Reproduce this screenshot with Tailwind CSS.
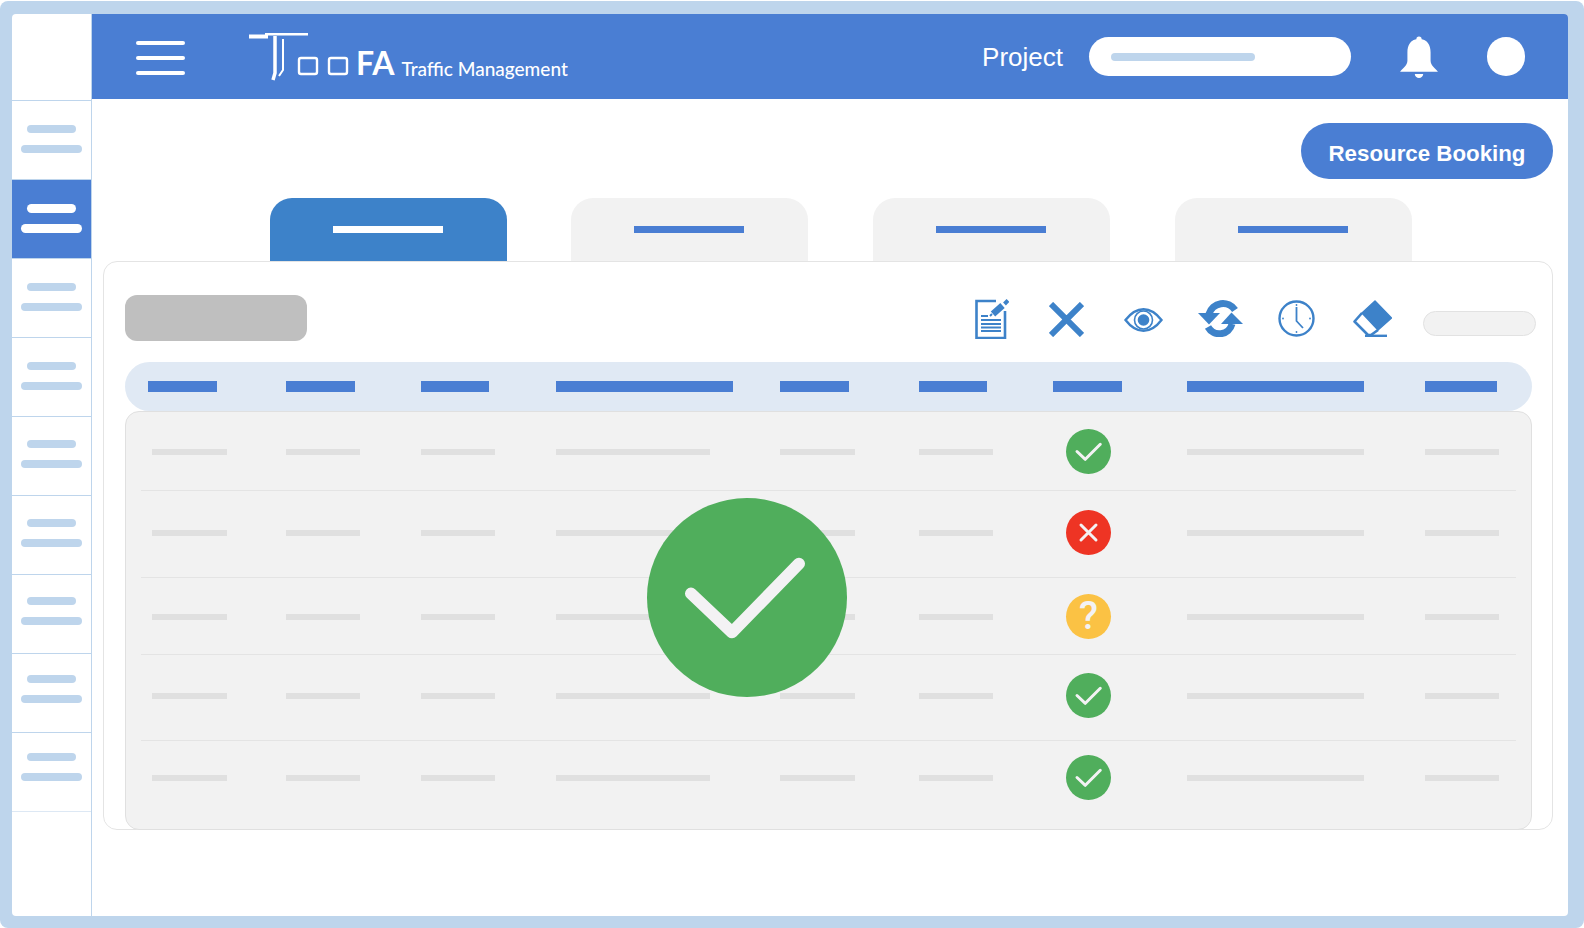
<!DOCTYPE html>
<html lang="en">
<head>
  <meta charset="UTF-8" />
  <title>Toofa Traffic Management</title>
  <script src="https://cdn.jsdelivr.net/npm/@tailwindcss/browser@4"></script>
</head>
<body class="bg-white font-['Liberation_Sans',sans-serif]">

  <!-- outer frame -->
  <div class="w-[1584px] h-[927px] mt-px bg-[#bed5ec] rounded-lg pl-3 pt-[13px] pr-4 pb-3 overflow-hidden">
    <div class="flex h-full bg-white rounded overflow-hidden">

      <!-- sidebar -->
      <aside class="w-[80px] shrink-0 border-r border-[#bed5ec]">
        <div class="h-[87px] border-b border-[#bed5ec]"></div>
        <div id="sidebar"></div>
      </aside>

      <div class="flex-1 min-w-0">
        <!-- top bar -->
        <header class="flex items-center h-[85px] bg-[#4a7ed3] pl-11 text-white">
          <div class="flex flex-col gap-[11px] w-[49px] mt-[3px]">
            <span class="h-1 bg-white rounded-full"></span>
            <span class="h-1 bg-white rounded-full"></span>
            <span class="h-1 bg-white rounded-full"></span>
          </div>
          <div class="flex items-end ml-[64px] h-[50px] mt-[-2px]">
            <svg class="w-[101px] h-[50px] mb-[-2px]" viewBox="0 0 101 50" fill="none">
              <path d="M0 3.5H19" stroke="#fff" stroke-width="4"/>
              <path d="M16 1.2H59" stroke="#fff" stroke-width="2.4"/>
              <path d="M26 3V40L24 47" stroke="#fff" stroke-width="3.5"/>
              <path d="M34 6V37L30 43" stroke="#fff" stroke-width="2"/>
              <rect x="50" y="25" width="18" height="16" rx="2" stroke="#fff" stroke-width="2.4"/>
              <rect x="80" y="25" width="18" height="16" rx="2" stroke="#fff" stroke-width="2.4"/>
            </svg>
            <span class="ml-[6px] mb-[-1px] font-['Lato',sans-serif] font-bold text-[32px] leading-[38px]">FA</span>
            <span class="ml-[7px] font-['Lato',sans-serif] font-medium text-[19px] leading-[24px]">Traffic Management</span>
          </div>
          <span class="ml-auto text-[26px] leading-none">Project</span>
          <div class="flex items-center w-[262px] h-[39px] ml-[26px] pl-[22px] bg-white rounded-full">
            <span class="w-[144px] h-2 bg-[#bed5ec] rounded-full"></span>
          </div>
          <svg class="w-[40px] h-[42px] ml-[48px]" viewBox="0 0 38 41" preserveAspectRatio="none" fill="#fff">
            <circle cx="19" cy="3" r="2.5"/>
            <path d="M19 3C11 3 8 9 8 16V24C8 29 4 31 1 35H37C34 31 30 29 30 24V16C30 9 27 3 19 3Z"/>
            <path d="M15 37H23A4 4 0 0 1 15 37Z"/>
          </svg>
          <span class="w-[38px] h-[39px] ml-[48px] mr-[43px] bg-white rounded-full"></span>
        </header>

        <!-- booking button -->
        <div class="flex justify-end pt-6 pr-[15px]">
          <button class="w-[252px] h-[56px] pt-[5px] bg-[#4a7ed3] rounded-full text-white font-bold text-[22.3px]">Resource Booking</button>
        </div>

        <!-- tabs -->
        <div class="flex gap-[65px] pl-[178px] mt-[19px]">
          <div class="flex justify-center pt-7 pr-[2px] w-[237px] h-[63px] mr-[-1px] bg-[#3d82c9] rounded-t-[22px]"><span class="w-[110px] h-[7px] bg-white"></span></div>
          <div class="flex justify-center pt-7 pr-[2px] w-[237px] h-[63px] bg-[#f2f2f2] rounded-t-[22px]"><span class="w-[110px] h-[7px] bg-[#4a7ed3]"></span></div>
          <div class="flex justify-center pt-7 pr-[2px] w-[237px] h-[63px] bg-[#f2f2f2] rounded-t-[22px]"><span class="w-[110px] h-[7px] bg-[#4a7ed3]"></span></div>
          <div class="flex justify-center pt-7 pr-[2px] w-[237px] h-[63px] bg-[#f2f2f2] rounded-t-[22px]"><span class="w-[110px] h-[7px] bg-[#4a7ed3]"></span></div>
        </div>

        <!-- card -->
        <section class="relative ml-[11px] mr-[15px] pl-[21px] pr-5 pt-[33px] bg-white border border-[#e4e4e4] rounded-[14px]">
          <div class="flex items-center h-[46px]">
            <span class="w-[182px] h-[46px] bg-[#bfbfbf] rounded-xl"></span>

            <svg class="w-[34px] h-[41px] ml-auto" viewBox="0 0 34 41" fill="none" stroke="#3d82c9">
              <path d="M21 3H1.5V40H30V13" stroke-width="2.6"/>
              <path d="M6 18H13M6 22H26M6 26H26M6 29.5H26M6 33H26" stroke-width="1.8"/>
              <path d="M15 18L17 16" stroke-width="2"/>
              <path d="M18 16L27.5 7.5" stroke-width="6.5"/>
              <path d="M29.5 6L33 2.5" stroke-width="4"/>
            </svg>
            <svg class="w-[35px] h-[35px] ml-[40px] mt-[3px]" viewBox="0 0 35 35" fill="none" stroke="#3d82c9" stroke-width="6">
              <path d="M2 2L33 33M33 2L2 33"/>
            </svg>
            <svg class="w-[39px] h-[24px] ml-[40px] mt-[3px]" viewBox="0 0 39 24" fill="none" stroke="#3d82c9">
              <path d="M1.5 12C8 3.5 14 1.2 19.5 1.2S31 3.5 37.5 12C31 20.5 25 22.8 19.5 22.8S8 20.5 1.5 12Z" stroke-width="2.4"/>
              <circle cx="19.5" cy="12" r="9" stroke-width="1.6"/>
              <circle cx="19.5" cy="12" r="5.8" fill="#3d82c9" stroke="none"/>
            </svg>
            <svg class="w-[45px] h-[37px] ml-[35px]" viewBox="0 0 45 37" fill="none" stroke="#3d82c9" stroke-width="7">
              <path d="M11 14A14.5 14.5 0 0 1 37 10"/>
              <path d="M10 27A13 13 0 0 0 34 24"/>
              <polygon points="0,13 22,13 11,24.5" fill="#3d82c9" stroke="none"/>
              <polygon points="23,24 45,24 33.5,12.5" fill="#3d82c9" stroke="none"/>
            </svg>
            <svg class="w-[37px] h-[37px] ml-[35px]" viewBox="0 0 37 37" fill="none" stroke="#3d82c9">
              <circle cx="18.5" cy="18.5" r="17" stroke-width="2.4"/>
              <path d="M18.5 7V21L25 28" stroke-width="1.8"/>
              <circle cx="18.5" cy="5" r="0.9" fill="#3d82c9" stroke="none"/>
              <circle cx="18.5" cy="32" r="0.9" fill="#3d82c9" stroke="none"/>
              <circle cx="5" cy="18.5" r="0.9" fill="#3d82c9" stroke="none"/>
              <circle cx="32" cy="18.5" r="0.9" fill="#3d82c9" stroke="none"/>
            </svg>
            <svg class="w-[39px] h-[37px] ml-[38px]" viewBox="0 0 39 37" fill="none" stroke="#3d82c9" stroke-linejoin="round">
              <path d="M22 1L38.5 18L25 30L9 13Z" fill="#3d82c9" stroke-width="1.5"/>
              <path d="M9 13L1.5 21.5L15 35H18L25 30" stroke-width="2.6"/>
              <path d="M12 35.8H34" stroke-width="2.4"/>
            </svg>
            <span class="w-[113px] h-[25px] ml-[31px] mr-[-4px] mt-[11px] bg-[#f2f2f2] border border-[#e2e2e2] rounded-full"></span>
          </div>

          <!-- table head -->
          <div class="grid grid-cols-[138px_135px_135px_224px_139px_134px_134px_238px_1fr] items-center h-[49px] mt-[21px] pl-[23px] bg-[#e0e9f4] rounded-full">
            <span class="w-[69px] h-[11px] bg-[#4a7ed3]"></span>
            <span class="w-[69px] h-[11px] bg-[#4a7ed3]"></span>
            <span class="w-[68px] h-[11px] bg-[#4a7ed3]"></span>
            <span class="w-[177px] h-[11px] bg-[#4a7ed3]"></span>
            <span class="w-[69px] h-[11px] bg-[#4a7ed3]"></span>
            <span class="w-[68px] h-[11px] bg-[#4a7ed3]"></span>
            <span class="w-[69px] h-[11px] bg-[#4a7ed3]"></span>
            <span class="w-[177px] h-[11px] bg-[#4a7ed3]"></span>
            <span class="w-[72px] h-[11px] bg-[#4a7ed3]"></span>
          </div>

          <!-- table body -->
          <div id="rows" class="px-[15px] mb-[-1px] bg-[#f2f2f2] border border-[#e0e0e0] rounded-[14px]"></div>

          <!-- big status badge over the table -->
          <svg class="absolute left-[543px] top-[236px] w-[200px] h-[199px]" viewBox="0 0 200 200" preserveAspectRatio="none" fill="none">
            <circle cx="100" cy="100" r="100" fill="#50ae5c"/>
            <path d="M44 96L85 135L152 66" stroke="#f3f2f4" stroke-width="12" stroke-linecap="round" stroke-linejoin="round"/>
          </svg>
        </section>
      </div>
    </div>
  </div>

  <script>
    // Sidebar entries, the second one is selected
    const sidebar = document.getElementById("sidebar");
    const sidebarItems = [
      "flex flex-col items-center gap-3 h-[79px] pt-[24px] border-b border-[#bed5ec]",
      "flex flex-col items-center justify-center gap-[11px] h-[79px] pb-[2px] bg-[#4a7ed3] border-b border-[#bed5ec]",
      "flex flex-col items-center gap-3 h-[79px] pt-[24px] border-b border-[#bed5ec]",
      "flex flex-col items-center gap-3 h-[79px] pt-[24px] border-b border-[#bed5ec]",
      "flex flex-col items-center gap-3 h-[79px] pt-[23px] border-b border-[#bed5ec]",
      "flex flex-col items-center gap-3 h-[79px] pt-[23px] border-b border-[#bed5ec]",
      "flex flex-col items-center gap-3 h-[79px] pt-[22px] border-b border-[#bed5ec]",
      "flex flex-col items-center gap-3 h-[79px] pt-[21px] border-b border-[#bed5ec]",
      "flex flex-col items-center gap-3 h-[79px] pt-[20px] border-b border-[#dde8f4]",
    ];
    sidebarItems.forEach((classes, i) => {
      const item = document.createElement("div");
      item.className = classes;
      const barColor = i === 1 ? "bg-white h-[9px]" : "bg-[#bed5ec] h-2";
      item.innerHTML = `<span class="shrink-0 w-[49px] rounded-full ${barColor}"></span><span class="shrink-0 w-[61px] rounded-full ${barColor}"></span>`;
      sidebar.appendChild(item);
    });

    const okIcon = `<svg class="w-[45px] h-[45px]" viewBox="0 0 45 45" fill="none"><circle cx="22.5" cy="22.5" r="22.5" fill="#50ae5c"/><path d="M11 22.5L19.3 30.3L34.3 15.3" stroke="#f3f2f4" stroke-width="3" stroke-linecap="round" stroke-linejoin="round"/></svg>`;
    const badIcon = `<svg class="w-[45px] h-[45px]" viewBox="0 0 45 45" fill="none"><circle cx="22.5" cy="22.5" r="22.5" fill="#ee3424"/><path d="M15 15L30 30M30 15L15 30" stroke="#f3f2f4" stroke-width="3" stroke-linecap="round"/></svg>`;
    const askIcon = `<span class="flex items-center justify-center w-[45px] h-[45px] rounded-full bg-[#fbc244] text-[#f3f2f4] font-['Roboto',sans-serif] font-medium text-[39px] leading-none">?</span>`;

    const rows = [
      { size: "h-[79px] pt-[17px] border-b border-[#e4e4e4]", icon: okIcon },
      { size: "h-[87px] pt-[19px] border-b border-[#e4e4e4]", icon: badIcon },
      { size: "h-[77px] pt-[16px] border-b border-[#e4e4e4]", icon: askIcon },
      { size: "h-[86px] pt-[18px] border-b border-[#e4e4e4]", icon: okIcon },
      { size: "h-[88px] pt-[14px]", icon: okIcon },
    ];

    const rowsEl = document.getElementById("rows");
    for (const row of rows) {
      const el = document.createElement("div");
      el.className = `${row.size} pl-[11px]`;
      el.innerHTML = `<div class="grid grid-cols-[134px_135px_135px_224px_139px_147px_121px_238px_1fr] items-center h-[45px]">
        <span class="w-[75px] h-[6px] bg-[#e0e0e0]"></span>
        <span class="w-[74px] h-[6px] bg-[#e0e0e0]"></span>
        <span class="w-[74px] h-[6px] bg-[#e0e0e0]"></span>
        <span class="w-[154px] h-[6px] bg-[#e0e0e0]"></span>
        <span class="w-[75px] h-[6px] bg-[#e0e0e0]"></span>
        <span class="w-[74px] h-[6px] bg-[#e0e0e0]"></span>
        ${row.icon}
        <span class="w-[177px] h-[6px] bg-[#e0e0e0]"></span>
        <span class="w-[74px] h-[6px] bg-[#e0e0e0]"></span>
      </div>`;
      rowsEl.appendChild(el);
    }
  </script>

</body>
</html>
